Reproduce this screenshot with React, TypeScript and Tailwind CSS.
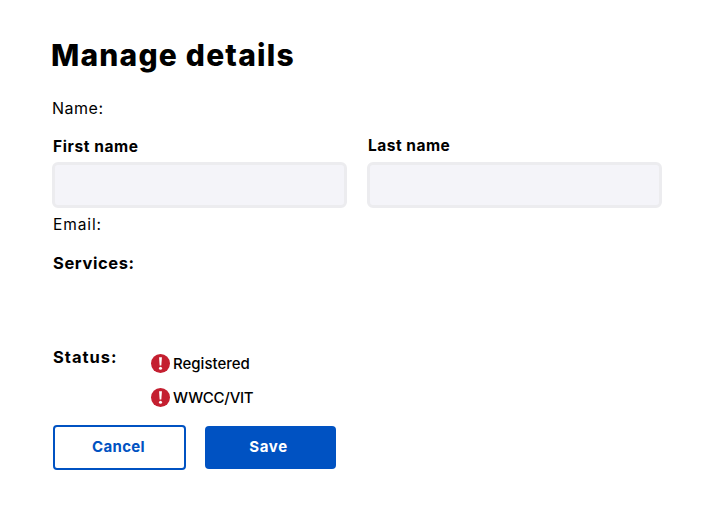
const statuses = ['Registered', 'WWCC/VIT'];

function AlertIcon() {
    return (
        <svg viewBox="0 0 20 20" className="w-[19px] h-[19px] shrink-0 mb-[2px]">
            <circle cx="10" cy="10" r="10" fill="#c41f30" />
            <path d="M8.5 3.4h3l-.6 8.8H9.1z" fill="#fff" />
            <circle cx="10" cy="15" r="1.6" fill="#fff" />
        </svg>
    );
}

export default function App() {
    return (
        <div className="min-h-[515px] bg-white pt-[37px] pl-[52px] pr-[59px] text-black font-['Inter',sans-serif]">
            <h1 className="text-[30px] leading-[36px] font-extrabold tracking-[1.2px] -ml-px">Manage details</h1>
            <p className="mt-[25px] text-[16px] leading-[20px] tracking-[0.5px]">Name:</p>

            {/* Name fields */}
            <div className="mt-[19px] grid grid-cols-2 gap-x-[20px]">
                <div>
                    <label className="block ml-px text-[15.5px] leading-[20px] font-bold tracking-[0.6px]">First name</label>
                    <input className="mt-[5px] block w-full h-[46px] rounded-[6px] border-[3px] border-[#ececef] bg-[#f4f4f9]" />
                </div>
                <div>
                    <label className="block ml-px text-[15.5px] leading-[20px] font-bold tracking-[0.5px] -mt-px">Last name</label>
                    <input className="mt-[6px] block w-full h-[46px] rounded-[6px] border-[3px] border-[#ececef] bg-[#f4f4f9]" />
                </div>
            </div>

            <p className="mt-[7px] ml-px text-[15.5px] leading-[20px] tracking-[0.9px]">Email:</p>
            <p className="mt-[18px] ml-px text-[16.5px] leading-[20px] font-bold tracking-[0.6px]">Services:</p>

            {/* Status list */}
            <div className="mt-[74px] flex">
                <p className="w-[99px] ml-px -mr-px text-[16.5px] leading-[20px] font-bold tracking-[1px]">Status:</p>
                <div className="mt-[8px] flex flex-col gap-[15px]">
                    {statuses.map((s) => (
                        <div key={s} className="flex items-center gap-[3px] h-[19px] text-[15px] font-medium">
                            <AlertIcon />
                            <span className={s === 'WWCC/VIT' ? 'tracking-[-0.25px]' : ''}>{s}</span>
                        </div>
                    ))}
                </div>
            </div>

            <div className="mt-[17px] ml-px flex items-center gap-[19px]">
                <button className="w-[133px] h-[45px] pr-[2px] rounded-[4px] border-2 border-[#0052c2] bg-white text-[15px] font-bold tracking-[0.3px] text-[#0052c2]">Cancel</button>
                <button className="w-[131px] h-[43px] pr-[4px] rounded-[4px] bg-[#0052c2] text-[15px] font-bold tracking-[0.6px] text-white">Save</button>
            </div>
        </div>
    );
}
